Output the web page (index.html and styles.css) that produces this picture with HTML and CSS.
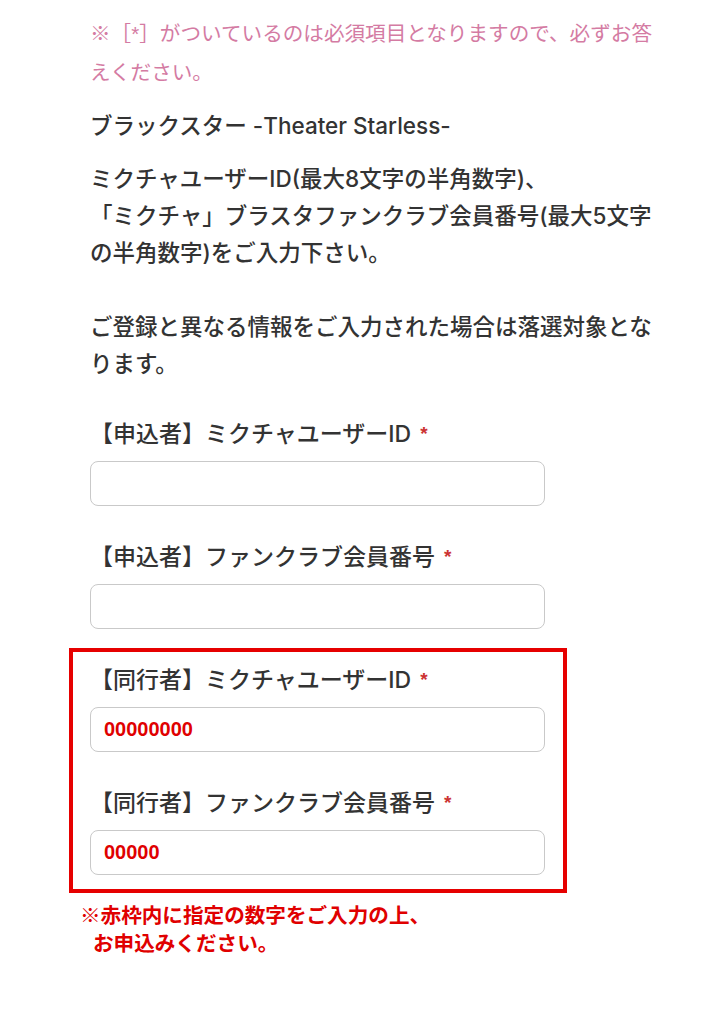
FILE: index.html
```html
<!DOCTYPE html>
<html lang="ja">
<head>
<meta charset="utf-8">
<title>フォーム</title>
<link rel="stylesheet" href="styles.css">
</head>
<body>
<main class="page">
  <p class="notice">※［*］がついているのは必須項目となりますので、必ずお答えください。</p>
  <p class="title">ブラックスター -Theater Starless-</p>
  <p class="desc">ミクチャユーザーID(最大8文字の半角数字)、<br>「ミクチャ」ブラスタファンクラブ会員番号(最大5文字の半角数字)をご入力下さい。<br><br>ご登録と異なる情報をご入力された場合は落選対象となります。</p>

  <div class="fields">
    <div class="field">
      <label class="label">【申込者】ミクチャユーザーID<span class="req">*</span></label>
      <input class="input" type="text">
    </div>
    <div class="field">
      <label class="label">【申込者】ファンクラブ会員番号<span class="req">*</span></label>
      <input class="input" type="text">
    </div>
    <div class="highlight">
      <div class="field">
        <label class="label">【同行者】ミクチャユーザーID<span class="req">*</span></label>
        <input class="input filled" type="text" value="00000000">
      </div>
      <div class="field">
        <label class="label">【同行者】ファンクラブ会員番号<span class="req">*</span></label>
        <input class="input filled" type="text" value="00000">
      </div>
    </div>
    <p class="note">※赤枠内に指定の数字をご入力の上、<br>お申込みください。</p>
  </div>
</main>
</body>
</html>
```

FILE: styles.css
```css
html, body {
  margin: 0;
  padding: 0;
  background: #ffffff;
}

body {
  font-family: "Inter", "Liberation Sans", "Noto Sans CJK JP", sans-serif;
  color: #333333;
}

.page {
  width: 580px;
  padding: 14px 0 60px 90px;
}

p {
  margin: 0;
}

.notice {
  font-family: "Liberation Sans", "Noto Sans CJK JP", sans-serif;
  font-size: 20.6px;
  line-height: 39px;
  color: #d47ba3;
}

.title {
  margin-top: 15px;
  font-size: 22.5px;
  line-height: 37px;
  font-weight: 500;
}

.desc {
  margin-top: 16px;
  font-size: 22.5px;
  line-height: 37px;
  font-weight: 500;
}

.fields {
  width: 455px;
  margin-top: 34px;
  display: flex;
  flex-direction: column;
}

.field {
  display: flex;
  flex-direction: column;
}

.field + .field {
  margin-top: 33px;
}

.label {
  font-size: 23px;
  line-height: 36px;
  font-weight: 500;
  margin-bottom: 9px;
  color: #333333;
}

.req {
  color: #cc3333;
  font-family: "Liberation Sans", sans-serif;
  font-size: 19px;
  font-weight: 700;
  margin-left: 9px;
  vertical-align: 2px;
}

.input {
  box-sizing: border-box;
  height: 45px;
  width: 100%;
  margin: 0;
  border: 1.5px solid #c9c9c9;
  border-radius: 8px;
  background: #ffffff;
  padding: 0 13px;
  font-family: "Liberation Sans", sans-serif;
  font-size: 20px;
  outline: none;
}

.input.filled {
  color: #e00000;
  font-weight: 600;
}

.highlight {
  margin: 19px -22px 0 -21px;
  padding: 10px 18px 14px 17px;
  border: 4px solid #e60000;
}

.note {
  margin: 7px 0 0 -10px;
  width: 460px;
  padding-left: 13px;
  text-indent: -13px;
  font-family: "Noto Sans CJK JP", sans-serif;
  font-size: 20.6px;
  line-height: 28px;
  font-weight: 700;
  color: #e00000;
}
```
